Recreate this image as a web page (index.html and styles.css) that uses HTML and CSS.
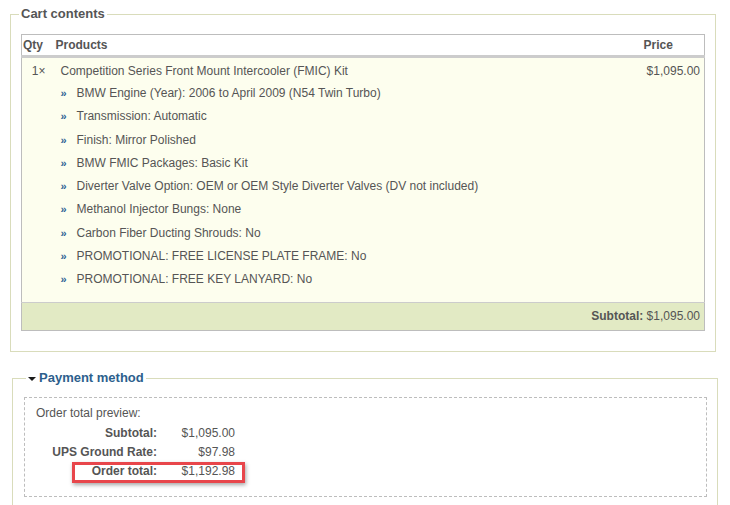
FILE: index.html
```html
<!DOCTYPE html>
<html lang="en">
<head>
<meta charset="utf-8">
<title>Checkout</title>
<link rel="stylesheet" href="styles.css">
</head>
<body>
<fieldset class="pane cart">
  <legend class="pane-title">Cart contents</legend>
  <table class="cart-table">
    <thead>
      <tr>
        <th class="col-qty">Qty</th>
        <th class="col-products">Products</th>
        <th class="col-price">Price</th>
      </tr>
    </thead>
    <tbody>
      <tr>
        <td class="cell-qty">1×</td>
        <td class="cell-products">
          <div class="product-name">Competition Series Front Mount Intercooler (FMIC) Kit</div>
          <ul class="options">
            <li><span class="bullet">»</span>BMW Engine (Year): 2006 to April 2009 (N54 Twin Turbo)</li>
            <li><span class="bullet">»</span>Transmission: Automatic</li>
            <li><span class="bullet">»</span>Finish: Mirror Polished</li>
            <li><span class="bullet">»</span>BMW FMIC Packages: Basic Kit</li>
            <li><span class="bullet">»</span>Diverter Valve Option: OEM or OEM Style Diverter Valves (DV not included)</li>
            <li><span class="bullet">»</span>Methanol Injector Bungs: None</li>
            <li><span class="bullet">»</span>Carbon Fiber Ducting Shrouds: No</li>
            <li><span class="bullet">»</span>PROMOTIONAL: FREE LICENSE PLATE FRAME: No</li>
            <li><span class="bullet">»</span>PROMOTIONAL: FREE KEY LANYARD: No</li>
          </ul>
        </td>
        <td class="cell-price">$1,095.00</td>
      </tr>
    </tbody>
    <tfoot>
      <tr>
        <td colspan="3" class="subtotal"><b>Subtotal:</b> $1,095.00</td>
      </tr>
    </tfoot>
  </table>
</fieldset>

<fieldset class="pane payment">
  <legend class="pane-title link"><span class="caret"></span>Payment method</legend>
  <div class="preview">
    <div class="preview-title">Order total preview:</div>
    <div class="line"><span class="label">Subtotal:</span><span class="value">$1,095.00</span></div>
    <div class="line"><span class="label">UPS Ground Rate:</span><span class="value">$97.98</span></div>
    <div class="line total"><span class="label">Order total:</span><span class="value">$1,192.98</span></div>
  </div>
</fieldset>
</body>
</html>
```

FILE: styles.css
```css
html, body {
  margin: 0;
  padding: 0;
  background: #ffffff;
}

body {
  font-family: "Liberation Sans", Arial, sans-serif;
  font-size: 12px;
  color: #555555;
}

.pane {
  box-sizing: border-box;
  border: 1px solid #d9dcbb;
  min-width: 0;
}

.pane-title {
  font-size: 13px;
  line-height: 16px;
  font-weight: bold;
  color: #555555;
  padding: 0 2px;
}

.cart {
  margin: 6px 0 0 10px;
  width: 706px;
  padding: 12px 10px 20px 10px;
}

.cart .pane-title {
  margin-left: -2px;
}

.cart-table {
  width: 684px;
  border-collapse: collapse;
  border: 1px solid #bdbdbd;
}

.cart-table th {
  background: #ffffff;
  text-align: left;
  font-weight: bold;
  height: 19px;
  padding: 1px 0 0 1px;
  border-bottom: 3px solid #cccccc;
  line-height: 19px;
  box-sizing: border-box;
}

.col-qty { width: 33px; }
.col-price { width: 62px; }

.cart-table tbody td {
  background: #fdfeee;
  vertical-align: top;
  line-height: 23.25px;
  padding: 2px 0 11px 0;
}

.options li {
  display: flex;
  line-height: 23.25px;
}

.cell-qty {
  text-align: right;
  padding-right: 9px !important;
}

.cell-products {
  padding-left: 6px !important;
}

.product-name {
  line-height: 22px;
}

.cell-price {
  text-align: right;
  padding-right: 4px !important;
}

.options {
  list-style: none;
  margin: 0;
  padding: 0;
}

.bullet {
  width: 16px;
  flex: none;
  color: #2e6395;
  font-weight: bold;
  font-size: 11px;
}

.subtotal {
  background: #e2eac4;
  border-top: 1px solid #cccccc;
  text-align: right;
  height: 27px;
  padding: 0 4px 0 0;
  line-height: 27px;
}

.payment {
  margin: 18px 0 0 12px;
  width: 706px;
  padding: 11px 10px 30px 11px;
}

.payment .pane-title {
  margin-left: 2px;
  color: #2d5f8d;
  display: flex;
  align-items: center;
}

.caret {
  width: 0;
  height: 0;
  border-left: 4px solid transparent;
  border-right: 4px solid transparent;
  border-top: 4px solid #1a1a1a;
  margin-right: 3px;
  margin-top: 1px;
}

.preview {
  border: 1px dashed #bdbdbd;
  padding: 8px 11px 15px 11px;
}

.preview-title {
  line-height: 15px;
  margin-bottom: 3px;
}

.line {
  display: flex;
  line-height: 19px;
}

.line .label {
  width: 121px;
  text-align: right;
  font-weight: bold;
}

.line .value {
  width: 78px;
  text-align: right;
}

.line.total {
  position: relative;
}

.line.total::after {
  content: "";
  position: absolute;
  left: 36px;
  top: 0;
  width: 173px;
  height: 21px;
  box-sizing: border-box;
  border: 3px solid #e8464b;
  box-shadow: 1px 2px 4px rgba(0, 0, 0, 0.35);
}
```
